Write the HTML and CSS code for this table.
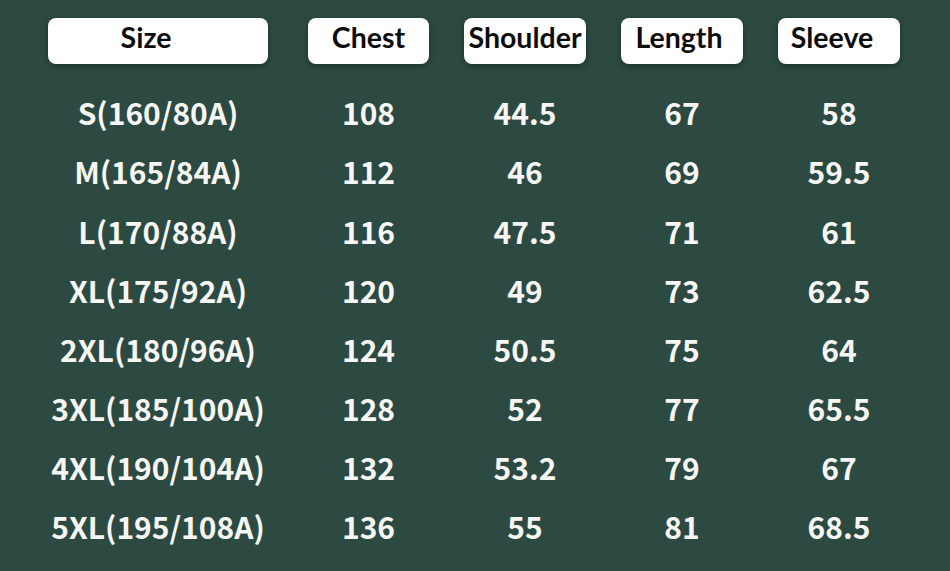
FILE: index.html
```html
<!DOCTYPE html>
<html>
<head>
<meta charset="utf-8">
<link rel="stylesheet" href="styles.css">
</head>
<body>
<div class="chart">
  <div class="head first"><span class="pill pill-size">Size</span></div>
  <div class="head"><span class="pill">Chest</span></div>
  <div class="head"><span class="pill">Shoulder</span></div>
  <div class="head"><span class="pill pill-length">Length</span></div>
  <div class="head"><span class="pill pill-sleeve">Sleeve</span></div>

  <div class="cell first">S(160/80A)</div><div class="cell">108</div><div class="cell">44.5</div><div class="cell">67</div><div class="cell">58</div>
  <div class="cell first">M(165/84A)</div><div class="cell">112</div><div class="cell">46</div><div class="cell">69</div><div class="cell">59.5</div>
  <div class="cell first">L(170/88A)</div><div class="cell">116</div><div class="cell">47.5</div><div class="cell">71</div><div class="cell">61</div>
  <div class="cell first">XL(175/92A)</div><div class="cell">120</div><div class="cell">49</div><div class="cell">73</div><div class="cell">62.5</div>
  <div class="cell first">2XL(180/96A)</div><div class="cell">124</div><div class="cell">50.5</div><div class="cell">75</div><div class="cell">64</div>
  <div class="cell first">3XL(185/100A)</div><div class="cell">128</div><div class="cell">52</div><div class="cell">77</div><div class="cell">65.5</div>
  <div class="cell first">4XL(190/104A)</div><div class="cell">132</div><div class="cell">53.2</div><div class="cell">79</div><div class="cell">67</div>
  <div class="cell first">5XL(195/108A)</div><div class="cell">136</div><div class="cell">55</div><div class="cell">81</div><div class="cell">68.5</div>
</div>
</body>
</html>
```
FILE: styles.css
```css
html, body {
  margin: 0;
  padding: 0;
  background: #2c4a42;
  width: 950px;
  height: 571px;
  overflow: hidden;
}
.chart {
  display: grid;
  grid-template-columns: 225px 121px 122px 122px 122px;
  grid-template-rows: 64.7px repeat(8, 59.15px);
  column-gap: 35px;
  padding: 18px 0 0 48px;
}
.head {
  display: flex;
  align-items: flex-start;
}
.head.first {
  padding-right: 5px;
}
.pill {
  flex: 1;
  display: flex;
  align-items: center;
  justify-content: center;
  box-sizing: border-box;
  padding-bottom: 9px;
  background: #ffffff;
  border-radius: 8px;
  box-shadow: 0 2px 6px rgba(0, 0, 0, 0.35);
  font-family: "Lato", "Liberation Sans", sans-serif;
  font-weight: 700;
  font-size: 28.5px;
  color: #0d0d0d;
  height: 46px;
}
.pill-size {
  padding-right: 24px;
}
.pill-length {
  padding-right: 6px;
}
.pill-sleeve {
  padding-right: 14px;
}
.cell {
  display: flex;
  align-items: center;
  justify-content: center;
  font-family: "Noto Sans CJK SC", "Noto Sans", sans-serif;
  font-weight: 700;
  font-size: 30px;
  color: #f6f6f4;
}
.cell.first {
  padding-right: 5px;
}
```
